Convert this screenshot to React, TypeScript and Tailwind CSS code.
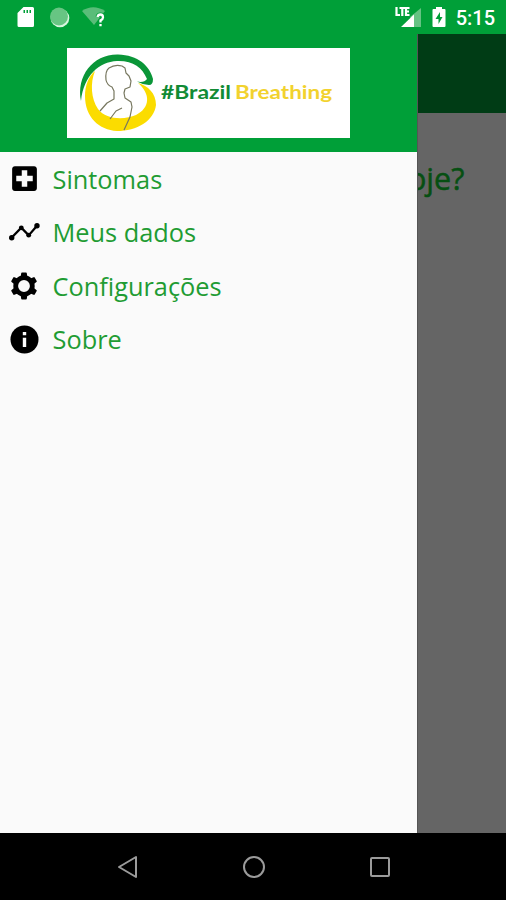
import type { ReactNode } from 'react';
import { MdLocalHospital } from 'react-icons/md';

const TimelineIcon = () => (
  <svg viewBox="0 0 33 33" width={33} height={33} fill="currentColor">
    <path fill="none" stroke="currentColor" strokeWidth="2.300" d="M3.500 21.700L13.300 11.600L20.700 19.400L29 9.800" />
    <circle cx="3.700" cy="21.700" r="2.700" />
    <circle cx="13.300" cy="11.800" r="2.400" />
    <circle cx="20.700" cy="19.200" r="2.400" />
    <circle cx="29" cy="9.800" r="2.700" />
  </svg>
);

const GearIcon = () => (
  <svg viewBox="0 0 32 32" width={32} height={32} fill="currentColor">
    <circle cx="16" cy="16" r="8.300" fill="none" stroke="currentColor" strokeWidth="4.800" />
    {[0, 60, 120, 180, 240, 300].map(angle => (
      <path key={angle} d="M12.500 8L13.200 3.300Q13.300 2.500 14 2.500H18Q18.700 2.500 18.800 3.300L19.500 8z" transform={`rotate(${angle} 16 16)`} />
    ))}
  </svg>
);

const InfoIcon = () => (
  <svg viewBox="0 0 33 33" width={33} height={33}>
    <circle cx="16.500" cy="16.500" r="14" fill="currentColor" />
    <path fill="white" d="M14.800 9H18.200V12.300H14.800zM14.800 14.700H18.200V24H14.800z" />
  </svg>
);

const MENU_ITEMS: { label: string; icon: ReactNode }[] = [
  { label: 'Sintomas', icon: <MdLocalHospital size={33} /> },
  { label: 'Meus dados', icon: <TimelineIcon /> },
  { label: 'Configurações', icon: <GearIcon /> },
  { label: 'Sobre', icon: <InfoIcon /> },
];

function StatusBar() {
  return (
    <div className="flex h-[34px] shrink-0 items-center bg-[#009f38] pr-[11px] pl-[17px] text-white">
      <svg width="17" height="20" viewBox="0 0 17 20">
        <path fill="white" fillRule="evenodd" d="M6.500 0H15.500Q17 0 17 1.500V18.500Q17 20 15.500 20H2Q.5 20 .5 18.500V6zM6.500 3V6H8V3zM9.500 3V6H11V3zM12.500 3V6H14V3z" />
      </svg>
      <svg className="ml-[15px]" width="21" height="21" viewBox="0 0 21 21">
        <circle cx="11" cy="11" r="9.300" fill="#d9f5df" />
        <circle cx="10" cy="9.500" r="9" fill="#67c583" />
      </svg>
      <svg className="ml-[12px]" width="24" height="20" viewBox="0 0 24 20">
        <path fill="#5abd79" d="M0 4Q11-3.500 23 4L12 18z" />
        <path fill="none" stroke="#009f38" strokeWidth="4" d="M15.500 10Q16 7.500 18.500 7.500T21 10.500Q21 12 18.500 14V19" />
        <path fill="none" stroke="white" strokeWidth="2.300" d="M15.500 10Q16 7.500 18.500 7.500T21 10.500Q21 12 18.500 13.500V15.500M18.500 17V19.300" />
      </svg>
      <div className="grow" />
      <svg width="27" height="22" viewBox="0 0 27 22">
        <path fill="#65c383" d="M15 11L26 2V21H19z" />
        <path fill="white" d="M6 21L19 8.500V21z" />
        <path fill="none" stroke="white" strokeWidth="2.200" d="M1.500 1V9H5M4.500 2H10M7.300 2V10M14.500 2H11V9H14.500M11 5.500H14" />
      </svg>
      <svg className="ml-[10px]" width="14" height="22" viewBox="0 0 14 22">
        <path fill="white" d="M4 1H10V3H12.500Q13.500 3 13.500 4V20Q13.500 21 12.500 21H1.500Q.5 21 .5 20V4Q.5 3 1.500 3H4z" />
        <path fill="#009f38" d="M8 6L3.500 13H6.500V18L10.500 11H8z" />
      </svg>
      <span className="mt-[2px] ml-[10px] font-[Roboto] text-[20px] leading-none font-medium">5:15</span>
    </div>
  );
}

function Logo() {
  return (
    <svg className="bg-white" width="283" height="90" viewBox="67 48 283 90">
      <path fill="#fbdc00" d="M95 71C90 83 91 99 98 109C106 120 125 120 136 115C150 108 151 94 138 83C148 86 156 93 156 105C154 121 137 131 117 131C99 130 85 117 85 96C85 85 89 76 95 71z" />
      <path fill="#0a9638" d="M81 101C76 76 93 54 118 54.500C138 55 150 66 153 79Q153 85 149 85Q143 85 137 81.500Q144 83 147 79C142 67 133 60.500 117 61C99 62 84 75 81 101z" />
      <path fill="none" stroke="#77775f" strokeWidth="1.200" strokeLinejoin="round" d="M100 111L107 103L114 99V91L112 87Q107 85 106 80Q105 71 109 68Q115 64 122 66L125 68L126 73L129 76L131 81L130 87L125 89L124 93L125 98L131 102L132 107L130 117L124 130M110 119L116 111L122 108" />
      <text x="161" y="99" textLength="70" lengthAdjust="spacingAndGlyphs" className="fill-[#118b35] font-[Lato] text-[18px] font-bold">#Brazil</text>
      <text x="235" y="99" textLength="97" lengthAdjust="spacingAndGlyphs" className="fill-[#f2d22e] font-[Lato] text-[18px] font-bold">Breathing</text>
    </svg>
  );
}

function Drawer() {
  return (
    <aside className="flex w-[417px] shrink-0 flex-col bg-[#fafafa]">
      <header className="flex h-[118px] justify-center bg-[#009f38] pt-[14px]">
        <Logo />
      </header>
      <nav className="font-['Open_Sans',sans-serif] text-[25.350px] text-[#1f9c33]">
        {MENU_ITEMS.map(item => (
          <a key={item.label} className="flex h-[53.500px] items-center pl-[8px]">
            <span className="flex w-[44.500px] text-black">{item.icon}</span>
            {item.label}
          </a>
        ))}
      </nav>
    </aside>
  );
}

function NavigationBar() {
  return (
    <div className="flex h-[67px] shrink-0 items-center justify-between bg-black px-[115px]">
      <svg width="23" height="24" viewBox="0 0 23 24" fill="none" stroke="#9b9b9b" strokeWidth="2" strokeLinejoin="round">
        <path d="M21 2V22L4 12z" />
      </svg>
      <svg width="24" height="24" viewBox="0 0 24 24" fill="none" stroke="#9b9b9b" strokeWidth="2">
        <circle cx="12" cy="12" r="10" />
      </svg>
      <svg width="22" height="24" viewBox="0 0 22 24" fill="none" stroke="#9b9b9b" strokeWidth="2">
        <rect x="2" y="3" width="18" height="18" rx="1" />
      </svg>
    </div>
  );
}

export default function App() {
  return (
    <div className="flex h-[900px] w-[506px] flex-col overflow-hidden bg-black">
      <StatusBar />
      <div className="flex h-[799px] shrink-0">
        <Drawer />
        <main className="flex grow flex-col overflow-hidden border-l border-[#555] bg-[#656565]">
          <div className="h-[79px] bg-[#003c15]" />
          <h1 className="mt-[42px] -ml-[10px] font-['Open_Sans',sans-serif] text-[30.500px] leading-[46px] text-[#064f12] [-webkit-text-stroke:0.5px_#064f12]">oje?</h1>
        </main>
      </div>
      <NavigationBar />
    </div>
  );
}
